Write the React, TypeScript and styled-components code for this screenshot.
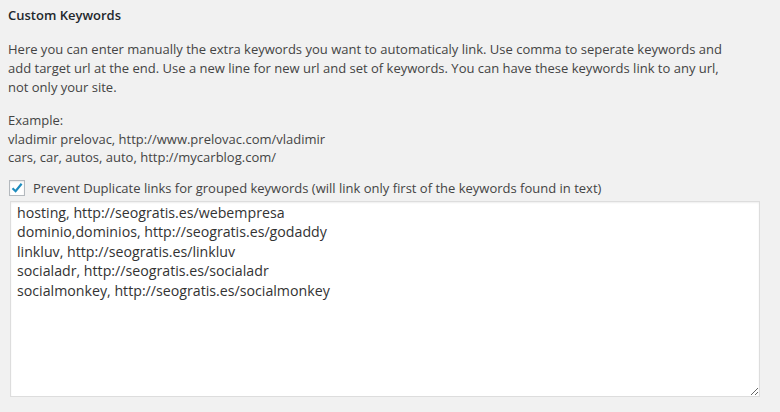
import React from "react";
import styled, { createGlobalStyle } from "styled-components";

const Global = createGlobalStyle`
  html, body { margin: 0; padding: 0; background: #f1f1f1; }
  body { font-family: "Open Sans", "Noto Sans", sans-serif; color: #444; font-size: 13px; }
`;

const Page = styled.div`
  width: 780px;
  height: 412px;
  padding: 0 0 0 8px;
  box-sizing: border-box;
  overflow: hidden;
`;

const Title = styled.h3`
  margin: 0;
  padding-top: 6px;
  font-size: 13px;
  font-weight: 600;
  line-height: 19px;
  color: #23282d;
`;

const Para = styled.p`
  margin: 15px 0 0 0;
  font-size: 13px;
  line-height: 19px;
  max-width: 720px;
`;

const Para2 = styled.p`
  margin: 14px 0 0 0;
  font-size: 13px;
  line-height: 18.5px;
`;

const CheckRow = styled.label`
  display: flex;
  align-items: center;
  gap: 8px;
  margin-top: 12px;
  padding-left: 1px;
  line-height: 19px;
`;

const Box = styled.span`
  width: 16px;
  height: 16px;
  box-sizing: border-box;
  border: 1px solid #b4b9be;
  background: #fff;
  box-shadow: inset 0 1px 2px rgba(0,0,0,0.1);
  display: flex;
  align-items: center;
  justify-content: center;
`;

const Area = styled.textarea`
  display: block;
  margin: 3px 0 0 2px;
  width: 750px;
  height: 196px;
  box-sizing: border-box;
  border: 1px solid #ddd;
  box-shadow: inset 0 1px 2px rgba(0,0,0,0.07);
  background: #fff;
  font-family: "Open Sans", "Noto Sans", sans-serif;
  font-size: 14.2px;
  line-height: 19.5px;
  color: #333;
  padding: 1px 6px;
  outline: none;
`;

const value = `hosting, http://seogratis.es/webempresa
dominio,dominios, http://seogratis.es/godaddy
linkluv, http://seogratis.es/linkluv
socialadr, http://seogratis.es/socialadr
socialmonkey, http://seogratis.es/socialmonkey`;

export default function App() {
  return (
    <Page>
      <Global />
      <Title>Custom Keywords</Title>
      <Para>
        Here you can enter manually the extra keywords you want to automaticaly link. Use comma to seperate keywords and add target url at the end. Use a new line for new url and set of keywords. You can have these keywords link to any url, not only your site.
      </Para>
      <Para2>
        Example:<br />
        vladimir prelovac, http://www.prelovac.com/vladimir<br />
        cars, car, autos, auto, http://mycarblog.com/
      </Para2>
      <CheckRow>
        <Box>
          <svg width="14" height="14" viewBox="0 0 14 14">
            <path d="M2.5 7.2 L5.6 10.2 L11.6 2.8" fill="none" stroke="#1e8cbe" strokeWidth="2.2" />
          </svg>
        </Box>
        Prevent Duplicate links for grouped keywords (will link only first of the keywords found in text)
      </CheckRow>
      <Area defaultValue={value} spellCheck={false} />
    </Page>
  );
}
